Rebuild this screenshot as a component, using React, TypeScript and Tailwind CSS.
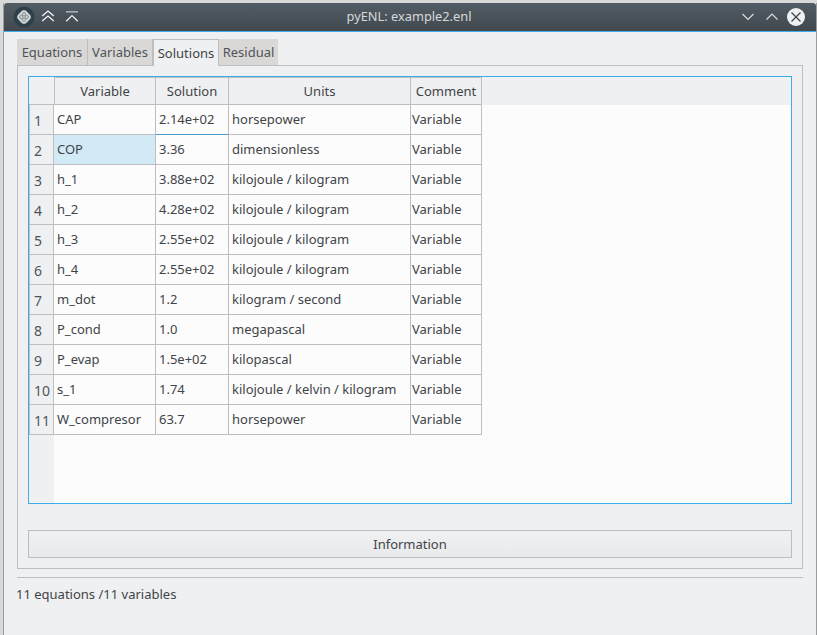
const rows: [string, string, string, string][] = [
  ["1", "CAP", "2.14e+02", "horsepower"],
  ["2", "COP", "3.36", "dimensionless"],
  ["3", "h_1", "3.88e+02", "kilojoule / kilogram"],
  ["4", "h_2", "4.28e+02", "kilojoule / kilogram"],
  ["5", "h_3", "2.55e+02", "kilojoule / kilogram"],
  ["6", "h_4", "2.55e+02", "kilojoule / kilogram"],
  ["7", "m_dot", "1.2", "kilogram / second"],
  ["8", "P_cond", "1.0", "megapascal"],
  ["9", "P_evap", "1.5e+02", "kilopascal"],
  ["10", "s_1", "1.74", "kilojoule / kelvin / kilogram"],
  ["11", "W_compresor", "63.7", "horsepower"],
];

function TitleBar() {
  return (
    <div className="h-[29px] shrink-0 flex items-center bg-gradient-to-b from-[#525c64] to-[#41494f] border-b border-[#3daee9] rounded-t-[3px]">
      <div className="flex-1 flex items-center pl-[9px]">
        <svg width="22" height="22" viewBox="0 0 22 22">
          <circle cx="11" cy="11" r="10.5" fill="#2f4148" />
          <path d="M11 4 13 4.8 17.2 9 18 11 17.2 13 13 17.2 11 18 9 17.2 4.8 13 4 11 4.8 9 9 4.8Z" fill="#cfd4d5" />
          <circle cx="11" cy="8.3" r="1.6" fill="none" stroke="#7b8a8f" strokeWidth="0.9" />
          <circle cx="11" cy="13.7" r="1.6" fill="none" stroke="#7b8a8f" strokeWidth="0.9" />
          <circle cx="8.3" cy="11" r="1.6" fill="none" stroke="#7b8a8f" strokeWidth="0.9" />
          <circle cx="13.7" cy="11" r="1.6" fill="none" stroke="#7b8a8f" strokeWidth="0.9" />
        </svg>
        <svg className="ml-[5px]" width="16" height="16" viewBox="0 0 16 16" fill="none" stroke="#f2f3f3" strokeWidth="1.3">
          <path d="M2.2 7 8 2 13.8 7M2.2 12 8 7 13.8 12" />
        </svg>
        <svg className="ml-[8px]" width="16" height="16" viewBox="0 0 16 16" fill="none" stroke="#eff0f1" strokeWidth="1.3">
          <path d="M2 2.8h12" strokeWidth="1.6" stroke="#a9aeb1" />
          <path d="M2.2 12.2 8 6.6 13.8 12.2" />
        </svg>
      </div>
      <span className="text-[12.8px] text-[#d5d8da]">pyENL: example2.enl</span>
      <div className="flex-1 flex items-center justify-end pr-[11px]">
        <svg width="14" height="10" viewBox="0 0 14 10" fill="none" stroke="#d9dcdd" strokeWidth="1.2">
          <path d="M1.5 2 7 7.5 12.5 2" />
        </svg>
        <svg className="ml-[10px]" width="14" height="10" viewBox="0 0 14 10" fill="none" stroke="#d9dcdd" strokeWidth="1.2">
          <path d="M1.5 7.5 7 2 12.5 7.5" />
        </svg>
        <div className="ml-[8px] w-[18px] h-[18px] rounded-full bg-[#eff0f1] flex items-center justify-center">
          <svg width="12" height="12" viewBox="0 0 12 12" fill="none" stroke="#3f474d" strokeWidth="1.3">
            <path d="M1.5 1.5 10.5 10.5M10.5 1.5 1.5 10.5" />
          </svg>
        </div>
      </div>
    </div>
  );
}

function Tabs() {
  const inactive = "h-[26px] pt-[2px] flex items-center justify-center bg-[#d9d8d6] border-r border-[#bcbebf] text-[#505458]";
  return (
    <div className="flex items-start h-[27px] ml-[13px] relative z-10 text-[13px] -mb-px">
      <div className={`${inactive} w-[71px]`}>Equations</div>
      <div className={`${inactive} w-[65px]`}>Variables</div>
      <div className="h-[27px] pt-[1px] w-[66px] flex items-center justify-center bg-[#eff0f1] border border-b-0 border-[#bcbebf] text-[#3f4448]">Solutions</div>
      <div className={`${inactive} w-[59px] border-r-0`}>Residual</div>
    </div>
  );
}

function Table() {
  return (
    <div className="h-[428px] border border-[#3daee9] flex flex-col bg-[#fcfcfc] text-[13px] text-[#3f4448]">
      <div className="flex h-[28px] shrink-0 bg-[#eff0f1]">
        <div className="w-[25px] border-b border-[#bcbebf]" />
        {[
          ["Variable", "w-[102px]"],
          ["Solution", "w-[73px]"],
          ["Units", "w-[182px]"],
          ["Comment", "w-[71px]"],
        ].map(([t, w], i) => (
          <div key={t} className={`${w} pt-[2px] flex items-center justify-center border-t border-b border-r border-[#bcbebf] ${i === 0 ? "border-l" : ""}`}>
            {t}
          </div>
        ))}
      </div>
      <div className="flex-1 flex flex-col bg-[linear-gradient(to_right,#eff0f1_25px,#fcfcfc_25px)]">
        {rows.map(([n, v, s, u]) => (
          <div key={n} className="flex h-[30px] shrink-0">
            <div className="w-[25px] pl-[4px] pt-[2px] text-[14px] flex items-center bg-[#eff0f1] border-l border-r border-b border-[#bcbebf] text-[#505458]">{n}</div>
            <div className={`w-[102px] pl-[3px] flex items-center border-b border-r border-[#bcbebf] ${n === "2" ? "bg-[#d2e9f6]" : "bg-[#fcfcfc]"}`}>{v}</div>
            <div className={`w-[73px] pl-[3px] flex items-center border-r border-[#bcbebf] ${n === "1" ? "border-b border-b-[#4a9ccb]" : "border-b"}`}>{s}</div>
            <div className="w-[182px] pl-[3px] flex items-center border-b border-r border-[#bcbebf]">{u}</div>
            <div className="w-[71px] pl-[1px] flex items-center border-b border-r border-[#bcbebf]">Variable</div>
          </div>
        ))}
      </div>
    </div>
  );
}

export default function App() {
  return (
    <div className="w-[817px] h-[635px] bg-[#d9d9d9] pt-[3px] pl-[3px] overflow-hidden font-['Noto_Sans','Open_Sans',sans-serif]">
      <div className="h-[632px] flex flex-col bg-[#eff0f1] border-l border-r border-[#9a9c9e]">
        <TitleBar />
        <div className="pt-[7px] flex flex-col flex-1">
          <Tabs />
          <div className="ml-[13px] w-[786px] h-[504px] border border-[#bcbebf] px-[10px] pt-[10px] bg-[#eff0f1]">
            <Table />
            <button className="mt-[26px] w-full h-[28px] pt-[2px] border border-[#bcbebf] bg-gradient-to-b from-[#eff0f1] to-[#e9eaeb] text-[13px] text-[#3f4448]">
              Information
            </button>
          </div>
          <div className="ml-[13px] w-[786px] h-px mt-[8px] bg-[#bcbebf]" />
          <div className="ml-[12px] mt-[7px] text-[13px] leading-[18px] text-[#3f4448]">11 equations /11 variables</div>
        </div>
      </div>
    </div>
  );
}
